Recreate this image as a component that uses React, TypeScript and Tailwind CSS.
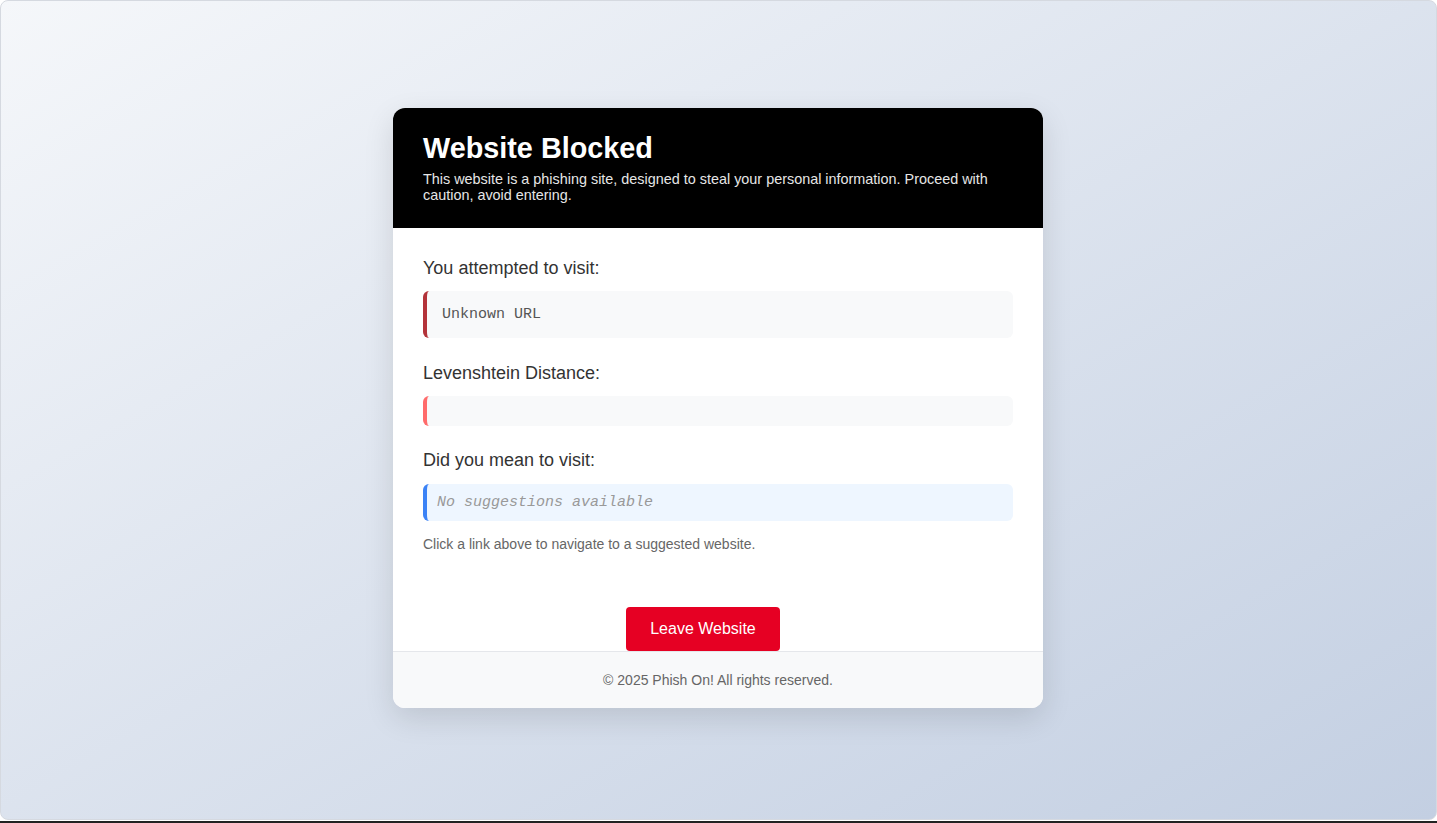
export default function App() {
  return (
    <div className="w-[1437px] h-[823px] bg-white flex flex-col font-['Liberation_Sans',Arial,sans-serif]">
      {/* page panel */}
      <div className="h-[820px] rounded-[8px] border border-[#d5d9e0] bg-gradient-to-br from-[#f5f7fa] to-[#c3cfe2] flex items-center justify-center">
        <div className="w-[650px] mb-[5px] -ml-px rounded-[12px] bg-white overflow-hidden shadow-[0_10px_30px_rgba(0,0,0,0.12)]">
          {/* header */}
          <div className="bg-black px-[30px] pt-6 pb-[25px]">
            <h1 className="text-[28.8px] font-bold text-white leading-[33px] mb-[6px]">Website Blocked</h1>
            <p className="text-[14.4px] leading-[16px] text-[#e6e6e6]">
              This website is a phishing site, designed to steal your personal information. Proceed with caution, avoid entering.
            </p>
          </div>

          {/* body */}
          <div className="px-[30px] pt-[30px] text-[#333]">
            <h3 className="text-[18px] leading-[21px] mb-3">You attempted to visit:</h3>
            <div className="bg-[#f8f9fa] border-l-4 border-[#b3333a] rounded-[6px] pl-[15px] py-[15px] font-['Liberation_Mono','Courier_New',monospace] text-[15px] leading-[17px] text-[#555]">
              Unknown URL
            </div>

            <h3 className="text-[18px] leading-[21px] mt-[25px] mb-3">Levenshtein Distance:</h3>
            <div className="bg-[#f8f9fa] border-l-4 border-[#ff6b6b] rounded-[6px] h-[30px]"></div>

            <h3 className="text-[18px] leading-[21px] mt-6 mb-[13px]">Did you mean to visit:</h3>
            <div className="bg-[#eef6ff] border-l-4 border-[#3b82f6] rounded-[6px] pl-[10px] py-[10px] font-['Liberation_Mono','Courier_New',monospace] italic text-[15px] leading-[17px] text-[#999]">
              No suggestions available
            </div>

            <p className="text-[14px] leading-[16px] text-[#666] mt-[15px]">Click a link above to navigate to a suggested website.</p>

            <div className="flex justify-center mt-[55px] pr-[30px]">
              <button className="bg-[#e60023] text-white text-[16px] leading-[18px] px-6 py-[13px] rounded-[4px]">Leave Website</button>
            </div>
          </div>

          {/* footer */}
          <div className="border-t border-[#e5e7eb] bg-[#f8f9fa] py-5 text-center text-[14px] leading-[16px] text-[#666]">
            © 2025 Phish On! All rights reserved.
          </div>
        </div>
      </div>
      <div className="h-px bg-white"></div>
      <div className="h-[2px] bg-[#222]"></div>
    </div>
  );
}
